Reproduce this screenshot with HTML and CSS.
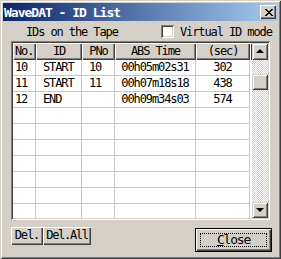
FILE: index.html
```html
<!DOCTYPE html>
<html lang="en">
<head>
    <meta charset="UTF-8">
    <title>WaveDAT - ID List</title>
    <link rel="stylesheet" href="styles.css">
</head>
<body>
    <div class="window">
        <div class="titlebar">
            <span class="title">WaveDAT - ID List</span>
            <div class="title-close">
                <svg width="8" height="7" viewBox="0 0 8 7" shape-rendering="crispEdges">
                    <path d="M0 0h2v1h-2zM6 0h2v1h-2zM1 1h2v1h-2zM5 1h2v1h-2zM2 2h4v1h-4zM3 3h2v1h-2zM2 4h4v1h-4zM1 5h2v1h-2zM5 5h2v1h-2zM0 6h2v1h-2zM6 6h2v1h-2z" fill="#000"/>
                </svg>
            </div>
        </div>

        <div class="content">
            <div class="top-row">
                <span class="caption">IDs on the Tape</span>
                <label class="check">
                    <span class="check-box"></span>
                    <span>Virtual ID mode</span>
                </label>
            </div>

            <div class="list">
                <div class="grid">
                    <div class="head">
                        <div class="hcell c-no">No.</div>
                        <div class="hcell c-id">ID</div>
                        <div class="hcell c-pno">PNo</div>
                        <div class="hcell c-abs">ABS Time</div>
                        <div class="hcell c-sec">(sec)</div>
                        <div class="hcell c-fill"></div>
                    </div>
                    <div class="rows">
                        <div class="row">
                            <div class="cell c-no">10</div>
                            <div class="cell c-id">START</div>
                            <div class="cell c-pno">10</div>
                            <div class="cell c-abs">00h05m02s31</div>
                            <div class="cell c-sec">302</div>
                        </div>
                        <div class="row">
                            <div class="cell c-no">11</div>
                            <div class="cell c-id">START</div>
                            <div class="cell c-pno">11</div>
                            <div class="cell c-abs">00h07m18s18</div>
                            <div class="cell c-sec">438</div>
                        </div>
                        <div class="row">
                            <div class="cell c-no">12</div>
                            <div class="cell c-id">END</div>
                            <div class="cell c-pno"></div>
                            <div class="cell c-abs">00h09m34s03</div>
                            <div class="cell c-sec">574</div>
                        </div>
                        <div class="row"><div class="cell c-no"></div><div class="cell c-id"></div><div class="cell c-pno"></div><div class="cell c-abs"></div><div class="cell c-sec"></div></div>
                        <div class="row"><div class="cell c-no"></div><div class="cell c-id"></div><div class="cell c-pno"></div><div class="cell c-abs"></div><div class="cell c-sec"></div></div>
                        <div class="row"><div class="cell c-no"></div><div class="cell c-id"></div><div class="cell c-pno"></div><div class="cell c-abs"></div><div class="cell c-sec"></div></div>
                        <div class="row"><div class="cell c-no"></div><div class="cell c-id"></div><div class="cell c-pno"></div><div class="cell c-abs"></div><div class="cell c-sec"></div></div>
                        <div class="row"><div class="cell c-no"></div><div class="cell c-id"></div><div class="cell c-pno"></div><div class="cell c-abs"></div><div class="cell c-sec"></div></div>
                        <div class="row"><div class="cell c-no"></div><div class="cell c-id"></div><div class="cell c-pno"></div><div class="cell c-abs"></div><div class="cell c-sec"></div></div>
                        <div class="row"><div class="cell c-no"></div><div class="cell c-id"></div><div class="cell c-pno"></div><div class="cell c-abs"></div><div class="cell c-sec"></div></div>
                    </div>
                </div>

                <div class="scrollbar">
                    <div class="sb-btn"><span class="arrow-up"></span></div>
                    <div class="sb-track short"></div>
                    <div class="sb-thumb"></div>
                    <div class="sb-track"></div>
                    <div class="sb-btn"><span class="arrow-down"></span></div>
                </div>
            </div>

            <div class="buttons">
                <div class="btn btn-del">Del.</div>
                <div class="btn btn-delall">Del.All</div>
                <div class="btn-default">
                    <div class="btn btn-close"><span class="focus"><u>C</u>lose</span></div>
                </div>
            </div>
        </div>
    </div>
</body>
</html>
```

FILE: styles.css
```css
body {
    margin: 0;
    background-color: #d4d0c8;
    font-family: "DejaVu Sans Mono", "Liberation Mono", monospace;
    font-size: 12px;
    letter-spacing: -1.1px;
    color: #000;
}

.window {
    width: 281px;
    height: 259px;
    box-sizing: border-box;
    padding: 3px;
    background-color: #d4d0c8;
    box-shadow: inset 1px 1px #d4d0c8, inset -1px -1px #404040,
        inset 2px 2px #fff, inset -2px -2px #808080;
    display: flex;
    flex-direction: column;
}

.titlebar {
    height: 18px;
    display: flex;
    align-items: center;
    justify-content: space-between;
    padding: 0 2px 0 1px;
    background: linear-gradient(90deg, #0a246a, #a6caf0);
}

.title {
    color: #fff;
    font-weight: bold;
    font-size: 13px;
    letter-spacing: -1px;
    white-space: nowrap;
}

.title-close {
    width: 16px;
    height: 14px;
    box-sizing: border-box;
    background-color: #d4d0c8;
    box-shadow: inset 1px 1px #fff, inset -1px -1px #404040, inset -2px -2px #808080;
    display: flex;
    align-items: center;
    justify-content: center;
    padding-left: 1px;
}

.content {
    flex: 1;
    padding: 0 8px;
    display: flex;
    flex-direction: column;
}

.top-row {
    height: 19px;
    display: flex;
    align-items: center;
    margin-top: 1px;
    white-space: nowrap;
}

.caption {
    margin-left: 15px;
    width: 135px;
    flex: none;
}

.check {
    display: flex;
    align-items: center;
    gap: 6px;
    flex: none;
}

.check-box {
    width: 13px;
    height: 13px;
    flex: none;
    box-sizing: border-box;
    background-color: #fff;
    box-shadow: inset 1px 1px #808080, inset -1px -1px #fff,
        inset 2px 2px #404040, inset -2px -2px #d4d0c8;
}

.list {
    height: 179px;
    box-sizing: border-box;
    padding: 2px;
    background-color: #fff;
    box-shadow: inset 1px 1px #808080, inset -1px -1px #fff,
        inset 2px 2px #404040, inset -2px -2px #d4d0c8;
    display: flex;
}

.grid {
    width: 239px;
    overflow: hidden;
}

.head {
    display: flex;
    height: 17px;
}

.hcell {
    box-sizing: border-box;
    background-color: #d4d0c8;
    box-shadow: inset 1px 1px #fff, inset -1px -1px #404040, inset -2px -2px #808080;
    text-align: center;
    line-height: 16px;
    white-space: nowrap;
}

.head .c-no {
    text-align: left;
    padding-left: 2px;
}

.c-no { width: 23px; }
.c-id { width: 46px; }
.c-pno { width: 33px; }
.c-abs { width: 81px; }
.c-sec { width: 54px; }
.c-fill { width: 2px; }

.rows {
    height: 158px;
    overflow: hidden;
}

.row {
    display: flex;
    height: 16px;
}

.cell {
    box-sizing: border-box;
    border-right: 1px solid #c8c8c8;
    border-bottom: 1px solid #c8c8c8;
    line-height: 15px;
    white-space: nowrap;
}

.row .c-no { padding-left: 2px; }
.row .c-id { padding-left: 7px; }
.row .c-pno { padding-left: 7px; }
.row .c-abs { text-align: center; }
.row .c-sec { text-align: center; }

.scrollbar {
    width: 16px;
    display: flex;
    flex-direction: column;
}

.sb-btn {
    height: 16px;
    flex: none;
    box-sizing: border-box;
    background-color: #d4d0c8;
    box-shadow: inset 1px 1px #d4d0c8, inset -1px -1px #404040,
        inset 2px 2px #fff, inset -2px -2px #808080;
    display: flex;
    align-items: center;
    justify-content: center;
}

.sb-btn:first-child {
    height: 17px;
}

.arrow-up,
.arrow-down {
    width: 0;
    height: 0;
    border-left: 4px solid transparent;
    border-right: 4px solid transparent;
}

.arrow-up {
    border-bottom: 4px solid #000;
    margin-top: -1px;
}

.arrow-down {
    border-top: 4px solid #000;
}

.sb-track {
    flex: 1;
    background: repeating-conic-gradient(#d4d0c8 0 25%, #fff 0 50%) 0 0 / 2px 2px;
}

.sb-track.short {
    flex: none;
    height: 14px;
}

.sb-thumb {
    height: 16px;
    flex: none;
    box-sizing: border-box;
    background-color: #d4d0c8;
    box-shadow: inset 1px 1px #d4d0c8, inset -1px -1px #404040,
        inset 2px 2px #fff, inset -2px -2px #808080;
}

.buttons {
    display: flex;
    align-items: flex-start;
    margin-top: 7px;
}

.btn {
    box-sizing: border-box;
    height: 18px;
    background-color: #d4d0c8;
    box-shadow: inset 1px 1px #fff, inset -1px -1px #404040, inset -2px -2px #808080;
    text-align: center;
    line-height: 17px;
    white-space: nowrap;
}

.btn-del { width: 32px; }

.btn-delall {
    width: 48px;
    letter-spacing: -1.3px;
}

.btn-default {
    margin-left: auto;
    margin-right: -2px;
    margin-top: 1px;
    width: 77px;
    height: 24px;
    box-sizing: border-box;
    border: 1px solid #000;
}

.btn-close {
    width: 75px;
    height: 22px;
    padding: 4px;
    line-height: 12px;
    font-size: 13px;
    letter-spacing: -1.2px;
}

.focus {
    display: block;
    height: 100%;
    box-sizing: border-box;
    border: 1px dotted #000;
}

.focus u {
    text-decoration-thickness: 1px;
    text-underline-offset: 1px;
}
```
